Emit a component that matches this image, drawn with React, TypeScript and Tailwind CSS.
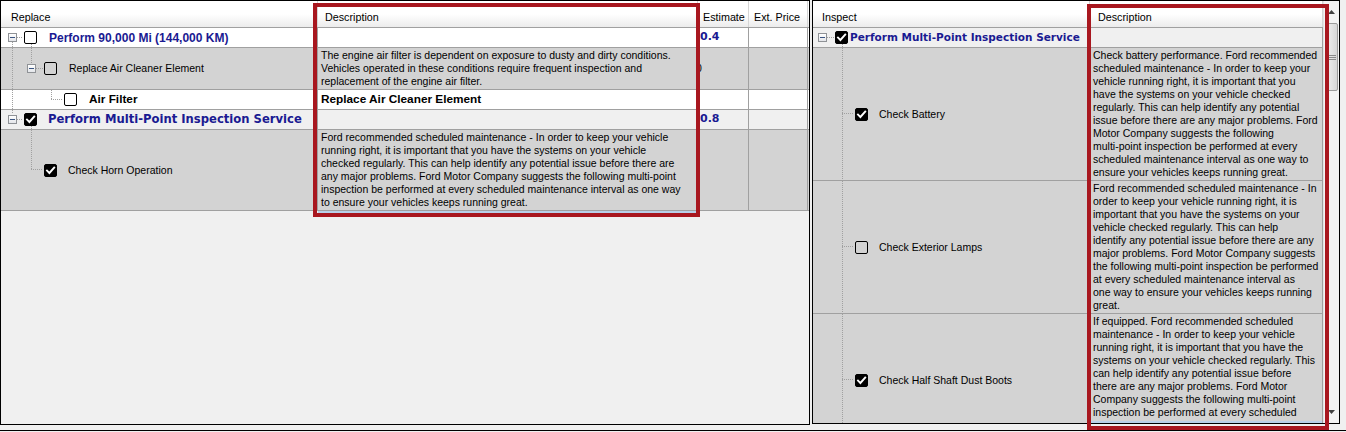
import React from "react";

type Seg = [number, number, number, number];

function Lines({ segs }: { segs: Seg[] }) {
  return (
    <svg className="pointer-events-none absolute left-0 top-0 overflow-visible" width="1" height="1">
      {segs.map(([x1, y1, x2, y2], i) => (
        <line
          key={i}
          x1={x1 === x2 ? x1 + 0.5 : x1}
          y1={y1 === y2 ? y1 + 0.5 : y1}
          x2={x1 === x2 ? x2 + 0.5 : x2}
          y2={y1 === y2 ? y2 + 0.5 : y2}
          stroke="#a0a0a0"
          strokeWidth="1"
          strokeDasharray="1 1"
          shapeRendering="crispEdges"
        />
      ))}
    </svg>
  );
}

function Check({ checked, className = "" }: { checked?: boolean; className?: string }) {
  return (
    <div
      className={
        "relative z-10 flex h-[13px] w-[13px] shrink-0 items-center justify-center rounded-[2px] border border-black " +
        (checked ? "bg-black " : "") +
        className
      }
    >
      {checked && (
        <svg width="11" height="11" viewBox="0 0 11 11">
          <path d="M2 5.6 L4.4 8 L9.2 2.6" stroke="white" strokeWidth="1.9" fill="none" strokeLinecap="square" />
        </svg>
      )}
    </div>
  );
}

function Expander({ className = "" }: { className?: string }) {
  return (
    <div
      className={
        "relative z-10 flex h-[9px] w-[9px] shrink-0 items-center justify-center border border-[#8f9296] bg-linear-to-b from-white to-[#e4e6ea] " +
        className
      }
    >
      <div className="h-[1px] w-[5px] bg-[#3b5582]" />
    </div>
  );
}

const TXT = "text-[10.5px] leading-[13px] whitespace-nowrap";
const NAVY_V = "font-['DejaVu_Sans',Verdana,sans-serif] font-bold text-[#1a1a92] whitespace-nowrap";
const GRID = "border-[#a0a0a0]";

function Desc({ lines, className = "" }: { lines: string[]; className?: string }) {
  return (
    <div className={"flex flex-col justify-center pl-[3px] " + className}>
      {lines.map((l, i) => (
        <div key={i} className={TXT}>
          {l}
        </div>
      ))}
    </div>
  );
}

function HeaderCell({ label, className }: { label: string; className: string }) {
  return (
    <div className={"h-full border-r border-[#d5d5d5] pt-[10px] text-[10.75px] leading-[13px] " + className}>{label}</div>
  );
}

const leftDesc2 = [
  "The engine air filter is dependent on exposure to dusty and dirty conditions.",
  "Vehicles operated in these conditions require frequent inspection and",
  "replacement of the engine air filter.",
];
const leftDesc5 = [
  "Ford recommended scheduled maintenance - In order to keep your vehicle",
  "running right, it is important that you have the systems on your vehicle",
  "checked regularly. This can help identify any potential issue before there are",
  "any major problems. Ford Motor Company suggests the following multi-point",
  "inspection be performed at every scheduled maintenance interval as one way",
  "to ensure your vehicles keeps running great.",
];
const rightDesc2 = [
  "Check battery performance. Ford recommended",
  "scheduled maintenance - In order to keep your",
  "vehicle running right, it is important that you",
  "have the systems on your vehicle checked",
  "regularly. This can help identify any potential",
  "issue before there are any major problems. Ford",
  "Motor Company suggests the following",
  "multi-point inspection be performed at every",
  "scheduled maintenance interval as one way to",
  "ensure your vehicles keeps running great.",
];
const rightDesc3 = [
  "Ford recommended scheduled maintenance - In",
  "order to keep your vehicle running right, it is",
  "important that you have the systems on your",
  "vehicle checked regularly. This can help",
  "identify any potential issue before there are any",
  "major problems. Ford Motor Company suggests",
  "the following multi-point inspection be performed",
  "at every scheduled maintenance interval as",
  "one way to ensure your vehicles keeps running",
  "great.",
];
const rightDesc4 = [
  "If equipped. Ford recommended scheduled",
  "maintenance - In order to keep your vehicle",
  "running right, it is important that you have the",
  "systems on your vehicle checked regularly. This",
  "can help identify any potential issue before",
  "there are any major problems. Ford Motor",
  "Company suggests the following multi-point",
  "inspection be performed at every scheduled",
  "maintenance interval as one way to ensure your",
  "vehicles keeps running great.",
];

function LeftPanel() {
  return (
    <div className="flex h-[425px] w-[810px] shrink-0 flex-col border border-black bg-[#f0f0f0]">
      {/* header */}
      <div className="flex h-[27px] shrink-0 border-b border-[#a0a0a0] bg-linear-to-b from-white via-white to-[#ececec]">
        <HeaderCell label="Replace" className="w-[317px] pl-[10px]" />
        <HeaderCell label="Description" className="w-[380px] pl-[7px]" />
        <HeaderCell label="Estimate" className="w-[51px] pl-[5px]" />
        <HeaderCell label="Ext. Price" className="w-[59px] pl-[5px]" />
      </div>
      {/* row 1 */}
      <div className={"flex h-[20px] shrink-0 border-b bg-white " + GRID}>
        <div className={"relative flex w-[317px] items-center border-r " + GRID}>
          <Lines segs={[[11, 14, 11, 19], [16, 9, 22, 9], [30, 16, 30, 19]]} />
          <Expander className="ml-[7px]" />
          <Check className="ml-[7px]" />
          <span className="ml-[12px] text-[12px] font-bold text-[#1a1a92] whitespace-nowrap">Perform 90,000 Mi (144,000 KM)</span>
        </div>
        <div className={"w-[380px] border-r " + GRID} />
        <div className={"flex w-[51px] items-center border-r pl-[2px] text-[11px] " + GRID + " " + NAVY_V}>0.4</div>
        <div className={"w-[59px] border-r " + GRID} />
      </div>
      {/* row 2 */}
      <div className={"flex h-[42px] shrink-0 border-b bg-[#d3d3d3] " + GRID}>
        <div className={"relative flex w-[317px] items-center border-r " + GRID}>
          <Lines segs={[[11, 0, 11, 41], [30, 0, 30, 15], [35, 20, 42, 20]]} />
          <Expander className="ml-[26px]" />
          <Check className="ml-[8px]" />
          <span className={"ml-[12px] " + TXT}>Replace Air Cleaner Element</span>
        </div>
        <Desc lines={leftDesc2} className={"w-[380px] border-r " + GRID} />
        <div className={"flex w-[51px] items-center overflow-hidden border-r " + GRID}>
          <span className={"-ml-[2px] " + TXT}>0</span>
        </div>
        <div className={"w-[59px] border-r " + GRID} />
      </div>
      {/* row 3 */}
      <div className={"flex h-[20px] shrink-0 border-b bg-white " + GRID}>
        <div className={"relative flex w-[317px] items-center border-r " + GRID}>
          <Lines segs={[[11, 0, 11, 19], [50, 0, 50, 9], [50, 9, 62, 9]]} />
          <Check className="ml-[63px]" />
          <span className="ml-[12px] text-[11.8px] font-bold whitespace-nowrap">Air Filter</span>
        </div>
        <div className={"flex w-[380px] items-center border-r pl-[3px] " + GRID}>
          <span className="text-[11.8px] font-bold whitespace-nowrap">Replace Air Cleaner Element</span>
        </div>
        <div className={"w-[51px] border-r " + GRID} />
        <div className={"w-[59px] border-r " + GRID} />
      </div>
      {/* row 4 */}
      <div className={"flex h-[20px] shrink-0 border-b bg-[#f0f0f0] " + GRID}>
        <div className={"relative flex w-[317px] items-center border-r " + GRID}>
          <Lines segs={[[11, 0, 11, 4], [16, 9, 22, 9], [30, 16, 30, 19]]} />
          <Expander className="ml-[7px]" />
          <Check checked className="ml-[7px]" />
          <span className={"ml-[11px] text-[11.6px] " + NAVY_V}>Perform Multi-Point Inspection Service</span>
        </div>
        <div className={"w-[380px] border-r " + GRID} />
        <div className={"flex w-[51px] items-center border-r pl-[2px] text-[11px] " + GRID + " " + NAVY_V}>0.8</div>
        <div className={"w-[59px] border-r " + GRID} />
      </div>
      {/* row 5 */}
      <div className={"flex h-[81px] shrink-0 border-b bg-[#d3d3d3] " + GRID}>
        <div className={"relative flex w-[317px] items-center border-r " + GRID}>
          <Lines segs={[[30, 0, 30, 39], [30, 39, 42, 39]]} />
          <Check checked className="ml-[43px]" />
          <span className={"ml-[11px] " + TXT}>Check Horn Operation</span>
        </div>
        <Desc lines={leftDesc5} className={"w-[380px] border-r " + GRID} />
        <div className={"w-[51px] border-r " + GRID} />
        <div className={"w-[59px] border-r " + GRID} />
      </div>
      <div className="ml-[317px] h-[3px] w-[380px] shrink-0 bg-[#b9d1ea]" />
    </div>
  );
}

function InspectCell({ label, checked }: { label: string; checked?: boolean }) {
  return (
    <div className="relative flex h-[132px] shrink-0 items-center">
      <Lines segs={[[29, 0, 29, 132], [29, 65, 41, 65]]} />
      <Check checked={checked} className="ml-[42px]" />
      <span className={"ml-[11px] " + TXT}>{label}</span>
    </div>
  );
}

function Scrollbar() {
  return (
    <div className="flex h-full w-[16px] shrink-0 flex-col items-center border-l border-[#e3e3e3] bg-[#f3f3f3]">
      <div className="flex h-[17px] w-full items-center justify-center pt-[4px]">
        <svg width="7" height="4" viewBox="0 0 7 4">
          <path d="M0 4 L3.5 0 L7 4 Z" fill="#404040" />
        </svg>
      </div>
      <div className="ml-[1px] mt-[5px] flex h-[68px] w-[11px] items-center justify-center rounded-[2px] border border-[#9b9b9b] bg-linear-to-r from-[#ececec] to-[#d6d6d6]">
        <svg width="7" height="5" viewBox="0 0 7 5">
          <path d="M0 0.5 H7 M0 2.5 H7 M0 4.5 H7" stroke="#8a8a8a" strokeWidth="1" />
        </svg>
      </div>
      <div className="flex-1" />
      <div className="flex h-[17px] w-full items-center justify-center pb-[6px]">
        <svg width="7" height="4" viewBox="0 0 7 4">
          <path d="M0 0 L3.5 4 L7 0 Z" fill="#404040" />
        </svg>
      </div>
    </div>
  );
}

function RightPanel() {
  return (
    <div className="ml-[2px] flex h-[424px] w-[528px] shrink-0 border border-black bg-[#f0f0f0]">
      <div className="flex w-[510px] shrink-0 flex-col">
        <div className="flex h-[27px] shrink-0 border-b border-[#a0a0a0] bg-linear-to-b from-white via-white to-[#ececec]">
          <HeaderCell label="Inspect" className="w-[277px] pl-[9px]" />
          <HeaderCell label="Description" className="w-[233px] pl-[8px]" />
        </div>
        {/* row 1 */}
        <div className={"flex h-[20px] shrink-0 border-b bg-[#f0f0f0] " + GRID}>
          <div className={"relative flex w-[277px] items-center border-r " + GRID}>
            <Lines segs={[[14, 9, 21, 9], [29, 16, 29, 19]]} />
            <Expander className="ml-[5px]" />
            <Check checked className="ml-[8px]" />
            <span className={"ml-[2px] text-[10.5px] " + NAVY_V}>Perform Multi-Point Inspection Service</span>
          </div>
          <div className={"w-[233px] border-r " + GRID} />
        </div>
        {/* row 2 */}
        <div className={"flex h-[133px] shrink-0 border-b bg-[#d3d3d3] " + GRID}>
          <div className={"w-[277px] border-r " + GRID}>
            <InspectCell label="Check Battery" checked />
          </div>
          <Desc lines={rightDesc2} className={"w-[233px] border-r " + GRID} />
        </div>
        {/* row 3 */}
        <div className={"flex h-[133px] shrink-0 border-b bg-[#d3d3d3] " + GRID}>
          <div className={"w-[277px] border-r " + GRID}>
            <InspectCell label="Check Exterior Lamps" />
          </div>
          <Desc lines={rightDesc3} className={"w-[233px] border-r " + GRID} />
        </div>
        {/* row 4 (clipped) */}
        <div className="flex min-h-0 flex-1 bg-[#d3d3d3]">
          <div className={"w-[277px] overflow-hidden border-r " + GRID}>
            <InspectCell label="Check Half Shaft Dust Boots" checked />
          </div>
          <div className={"flex w-[233px] flex-col border-r " + GRID}>
            <div className="min-h-0 flex-1 overflow-hidden">
              <Desc lines={rightDesc4} className="h-[132px]" />
            </div>
            <div className="h-[2px] shrink-0 bg-[#b9d1ea]" />
          </div>
        </div>
      </div>
      <Scrollbar />
    </div>
  );
}

export default function App() {
  return (
    <div className="relative h-[432px] w-[1346px] overflow-hidden bg-[#f0f0f0] font-['Liberation_Sans',Arial,sans-serif] text-black">
      <div className="flex h-[431px] items-start border-b border-black">
        <LeftPanel />
        <RightPanel />
      </div>
      <div className="pointer-events-none absolute left-[313px] top-[3px] h-[214px] w-[387px] border-4 border-[#a8171f]" />
      <div className="pointer-events-none absolute left-[1087px] top-[4px] h-[426px] w-[242px] border-4 border-[#a8171f]" />
    </div>
  );
}
